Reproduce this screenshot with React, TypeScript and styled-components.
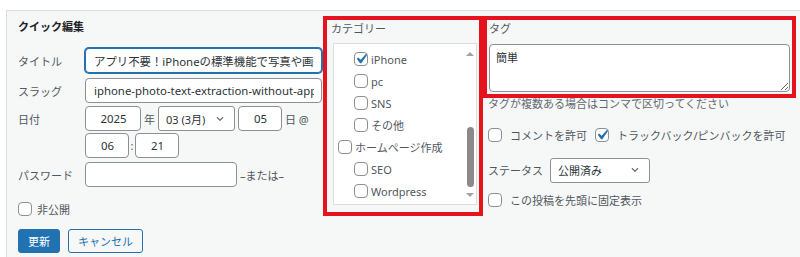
import styled, { createGlobalStyle } from "styled-components";

const GlobalStyle = createGlobalStyle`
  html, body {
    margin: 0;
    padding: 0;
    background: #ffffff;
  }
  body {
    font-family: "Noto Sans", "Noto Sans CJK JP", sans-serif;
    font-size: 11px;
    color: #2c3338;
  }
  * {
    box-sizing: border-box;
  }
`;

const Chevron = () => (
  <svg width="10" height="10" viewBox="0 0 20 20">
    <path d="M5 6l5 5 5-5 2 1-7 7-7-7 2-1z" fill="#50575e" />
  </svg>
);

const Check = ({ checked }: { checked?: boolean }) => (
  <CheckBox>
    {checked && (
      <svg width="20" height="20" viewBox="0 0 20 20">
        <path
          d="M14.83 4.89l1.34.94-5.81 8.38H9.02L5.78 9.67l1.34-1.25 2.57 2.4z"
          fill="#2271b1"
        />
      </svg>
    )}
  </CheckBox>
);

type CatProps = { label: string; depth: number; checked?: boolean };

const CatItem = ({ label, depth, checked }: CatProps) => (
  <CatRow $depth={depth}>
    <Check checked={checked} />
    <span>{label}</span>
  </CatRow>
);

export default function App() {
  return (
    <>
      <GlobalStyle />
      <Frame>
        <Panel>
          <LeftCol>
            <Heading>クイック編集</Heading>

            <FieldRow>
              <FieldLabel>タイトル</FieldLabel>
              <TextInput
                $width={237}
                $focused
                readOnly
                value="アプリ不要！iPhoneの標準機能で写真や画像から文字を抽出する方法"
              />
            </FieldRow>

            <FieldRow $top={5}>
              <FieldLabel>スラッグ</FieldLabel>
              <TextInput
                $width={237}
                readOnly
                value="iphone-photo-text-extraction-without-app"
              />
            </FieldRow>

            <FieldRow $top={3}>
              <FieldLabel>日付</FieldLabel>
              <TextInput $width={56} $center readOnly value="2025" />
              <Unit>年</Unit>
              <Select $width={77}>
                <span>03 (3月)</span>
                <Chevron />
              </Select>
              <TextInput $width={44} $center readOnly value="05" />
              <Unit>日 @</Unit>
            </FieldRow>

            <FieldRow $top={2} $indent>
              <TextInput $width={44} $center readOnly value="06" />
              <Colon>:</Colon>
              <TextInput $width={44} $center readOnly value="21" />
            </FieldRow>

            <FieldRow $top={4}>
              <FieldLabel>パスワード</FieldLabel>
              <TextInput $width={152} readOnly value="" />
              <Unit>–または–</Unit>
            </FieldRow>

            <CheckRow $top={12} $gap={5}>
              <Check />
              <span>非公開</span>
            </CheckRow>

            <Buttons>
              <PrimaryButton>更新</PrimaryButton>
              <SecondaryButton>キャンセル</SecondaryButton>
            </Buttons>
          </LeftCol>

          <CategoryBox>
            <BoxLabel>カテゴリー</BoxLabel>
            <Checklist>
              <CatList>
                <CatItem label="iPhone" depth={1} checked />
                <CatItem label="pc" depth={1} />
                <CatItem label="SNS" depth={1} />
                <CatItem label="その他" depth={1} />
                <CatItem label="ホームページ作成" depth={0} />
                <CatItem label="SEO" depth={1} />
                <CatItem label="Wordpress" depth={1} />
              </CatList>
              <ScrollBar>
                <ArrowUp />
                <Thumb />
                <ArrowDown />
              </ScrollBar>
            </Checklist>
          </CategoryBox>

          <RightCol>
            <TagBox>
              <BoxLabel>タグ</BoxLabel>
              <TagArea readOnly value="簡単" />
            </TagBox>

            <RightBody>
              <Help>タグが複数ある場合はコンマで区切ってください</Help>

              <CheckRow $top={15} $gap={8}>
                <Check />
                <span>コメントを許可</span>
                <Check checked />
                <span>トラックバック/ピンバックを許可</span>
              </CheckRow>

              <StatusRow>
                <span>ステータス</span>
                <Select $width={100}>
                  <span>公開済み</span>
                  <Chevron />
                </Select>
              </StatusRow>

              <CheckRow $top={7} $gap={8}>
                <Check />
                <span>この投稿を先頭に固定表示</span>
              </CheckRow>
            </RightBody>
          </RightCol>
        </Panel>
      </Frame>
    </>
  );
}

const Frame = styled.div`
  padding: 10px 0 0 6px;
  height: 257px;
  overflow: hidden;
`;

const Panel = styled.div`
  height: 247px;
  background: #f6f7f7;
  border-top: 1px solid #dcdcde;
  border-left: 1px solid #dcdcde;
  padding: 5px 0 0 11px;
  display: flex;
  align-items: flex-start;
`;

const LeftCol = styled.div`
  width: 305px;
  display: flex;
  flex-direction: column;
`;

const Heading = styled.div`
  height: 22px;
  line-height: 22px;
  margin-bottom: 10px;
  font-weight: 700;
  color: #1d2327;
`;

const FieldRow = styled.div<{ $top?: number; $indent?: boolean }>`
  display: flex;
  align-items: center;
  height: 25px;
  margin-top: ${(p) => p.$top ?? 0}px;
  padding-left: ${(p) => (p.$indent ? 67 : 0)}px;
  color: #50575e;
`;

const FieldLabel = styled.span`
  width: 67px;
  flex: none;
`;

const TextInput = styled.input<{
  $width: number;
  $center?: boolean;
  $focused?: boolean;
}>`
  width: ${(p) => p.$width}px;
  height: 25px;
  flex: none;
  margin: 0;
  padding: 0 7px 0 8px;
  font: inherit;
  font-size: 11.4px;
  color: #2c3338;
  text-align: ${(p) => (p.$center ? "center" : "left")};
  background: #ffffff;
  border: 1px solid ${(p) => (p.$focused ? "#2271b1" : "#8c8f94")};
  border-radius: 4px;
  box-shadow: ${(p) => (p.$focused ? "0 0 0 1px #2271b1" : "none")};
  outline: none;
`;

const Unit = styled.span`
  margin: 0 3px;
  flex: none;
`;

const Colon = styled.span`
  width: 6px;
  text-align: center;
`;

const Select = styled.div<{ $width: number }>`
  width: ${(p) => p.$width}px;
  height: 25px;
  flex: none;
  margin-right: 3px;
  padding: 0 9px 0 7px;
  display: flex;
  align-items: center;
  justify-content: space-between;
  background: #ffffff;
  border: 1px solid #8c8f94;
  border-radius: 3px;
  color: #2c3338;
`;

const CheckBox = styled.span`
  width: 14px;
  height: 14px;
  flex: none;
  display: inline-flex;
  align-items: center;
  justify-content: center;
  background: #ffffff;
  border: 1px solid #8c8f94;
  border-radius: 4px;
  overflow: visible;

  & > svg {
    flex: none;
    margin: -3px;
  }
`;

const CheckRow = styled.div<{ $top: number; $gap: number }>`
  display: flex;
  align-items: center;
  height: 20px;
  margin-top: ${(p) => p.$top}px;
  gap: ${(p) => p.$gap}px;
  color: #50575e;
`;

const Buttons = styled.div`
  display: flex;
  gap: 8px;
  margin-top: 10px;
`;

const BaseButton = styled.button`
  height: 24px;
  padding: 0 9px;
  font: inherit;
  font-size: 11px;
  border-radius: 3px;
  border: 1px solid #2271b1;
  cursor: pointer;
`;

const PrimaryButton = styled(BaseButton)`
  background: #2271b1;
  color: #ffffff;
`;

const SecondaryButton = styled(BaseButton)`
  background: #f6f7f7;
  color: #2271b1;
`;

const CategoryBox = styled.div`
  width: 160px;
  height: 200px;
  flex: none;
  border: 4px solid #e5131d;
  padding: 0 2px 0 4px;
  display: flex;
  flex-direction: column;
`;

const BoxLabel = styled.div`
  height: 17px;
  line-height: 17px;
  color: #50575e;
`;

const Checklist = styled.div`
  margin: 6px 0 0 2px;
  width: 144px;
  height: 162px;
  display: flex;
  background: #ffffff;
  border: 1px solid #dcdcde;
  overflow: hidden;
`;

const CatList = styled.div`
  flex: 1;
  padding-top: 4px;
`;

const CatRow = styled.div<{ $depth: number }>`
  height: 22px;
  display: flex;
  align-items: center;
  gap: 3px;
  padding-left: ${(p) => 4 + p.$depth * 16}px;
  color: #50575e;
  white-space: nowrap;
`;

const ScrollBar = styled.div`
  width: 12px;
  flex: none;
  display: flex;
  flex-direction: column;
  align-items: center;
  padding: 8px 0 7px;
  background: #ffffff;
`;

const ArrowUp = styled.div`
  width: 0;
  height: 0;
  border-left: 4px solid transparent;
  border-right: 4px solid transparent;
  border-bottom: 4px solid #a3a3a3;
`;

const ArrowDown = styled.div`
  width: 0;
  height: 0;
  border-left: 4px solid transparent;
  border-right: 4px solid transparent;
  border-top: 4px solid #a3a3a3;
`;

const Thumb = styled.div`
  width: 7px;
  height: 60px;
  margin: auto 0 6px;
  background: #8a8a8a;
  border-radius: 4px;
`;

const RightCol = styled.div`
  width: 313px;
  flex: none;
  display: flex;
  flex-direction: column;
`;

const RightBody = styled.div`
  display: flex;
  flex-direction: column;
  padding-left: 5px;
`;

const TagBox = styled.div`
  height: 82px;
  border: 4px solid #e5131d;
  padding: 0 2px;
  display: flex;
  flex-direction: column;
`;

const TagArea = styled.textarea`
  margin-top: 7px;
  width: 301px;
  height: 48px;
  padding: 4px 6px;
  font: inherit;
  font-size: 11px;
  color: #2c3338;
  background: #ffffff;
  border: 1px solid #8c8f94;
  border-radius: 4px;
  outline: none;
`;

const Help = styled.div`
  line-height: 12px;
  color: #646970;
`;

const StatusRow = styled.div`
  display: flex;
  align-items: center;
  gap: 7px;
  height: 26px;
  margin-top: 12px;
  color: #50575e;
`;
